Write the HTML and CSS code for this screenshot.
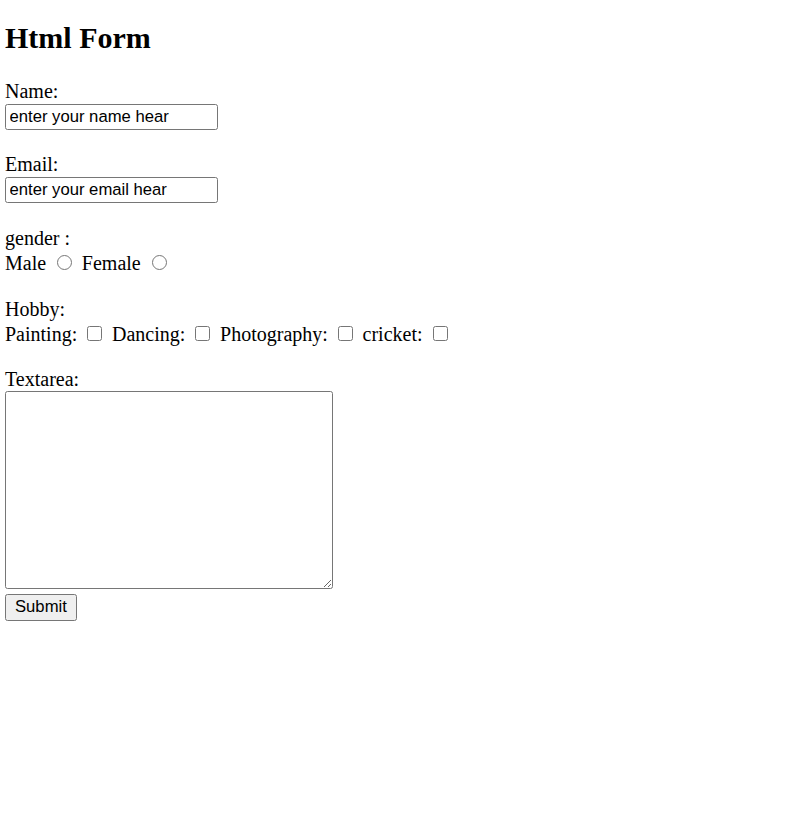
FILE: index.html
```html
<!DOCTYPE html>
<html>
<head>
<meta charset="utf-8">
<title>Html Form</title>
<link rel="stylesheet" href="styles.css">
</head>
<body>
<section class="page">
  <h1 class="title">Html Form</h1>
  <form class="form">
    <div class="group group-name">
      <label class="line" for="name">Name:</label>
      <div class="input-row"><input class="text-input" id="name" type="text" value="enter your name hear"></div>
    </div>
    <div class="group">
      <label class="line" for="email">Email:</label>
      <div class="input-row"><input class="text-input" id="email" type="text" value="enter your email hear"></div>
    </div>
    <div class="group">
      <div class="line">gender :</div>
      <div class="line line-radio">Male <input class="radio" type="radio" name="gender"> Female <input class="radio" type="radio" name="gender"></div>
    </div>
    <div class="group group-tight">
      <div class="line">Hobby:</div>
      <div class="line line-check">Painting: <input class="check" type="checkbox"> Dancing: <input class="check" type="checkbox"> Photography: <input class="check" type="checkbox"> cricket: <input class="check" type="checkbox"></div>
    </div>
    <div class="group-last">
      <label class="line" for="area">Textarea:</label>
      <textarea class="area" id="area"></textarea>
      <button class="submit" type="button">Submit</button>
    </div>
  </form>
</section>
</body>
</html>
```

FILE: styles.css
```css
html, body {
  background: #ffffff;
}
body {
  margin: 0;
  padding: 0 5px;
  font-family: "Liberation Serif", "Times New Roman", serif;
  font-size: 20px;
  color: #000000;
}
.title {
  margin: 21px 0 25px;
  font-size: 30px;
  font-weight: bold;
  line-height: 34px;
}
.form {
  margin: 0;
}
.line {
  display: block;
  line-height: 23px;
}
.line-radio {
  padding-top: 1px;
}
.line-check {
  padding-top: 1px;
}
.input-row {
  height: 28px;
  padding-top: 1px;
  box-sizing: border-box;
}
.group {
  margin-bottom: 23px;
}
.group-name {
  margin-bottom: 22px;
}
.group-tight {
  margin-bottom: 22px;
}
.text-input {
  display: block;
  box-sizing: border-box;
  width: 213px;
  height: 26px;
  margin: 0;
  padding: 1px 3.5px;
  border: 1px solid #767676;
  border-radius: 2.5px;
  font-family: "Liberation Sans", Arial, sans-serif;
  font-size: 16.67px;
  color: #000000;
  background: #ffffff;
}
.radio {
  width: 15px;
  height: 15px;
  margin: 3.75px 4.5px 0 6.25px;
}
.check {
  width: 15px;
  height: 15px;
  margin: 3.75px 4.75px 3.75px 5px;
}
.area {
  display: block;
  box-sizing: border-box;
  width: 328px;
  height: 198px;
  margin: 0;
  padding: 2.5px;
  border: 1px solid #767676;
  border-radius: 2.5px;
  font-family: "Liberation Mono", monospace;
  font-size: 16.67px;
}
.submit {
  display: block;
  box-sizing: border-box;
  height: 27px;
  margin-top: 5px;
  padding: 1px 9px;
  border: 1px solid #767676;
  border-radius: 2.5px;
  background: #efefef;
  font-family: "Liberation Sans", Arial, sans-serif;
  font-size: 16.67px;
  color: #000000;
}
```
